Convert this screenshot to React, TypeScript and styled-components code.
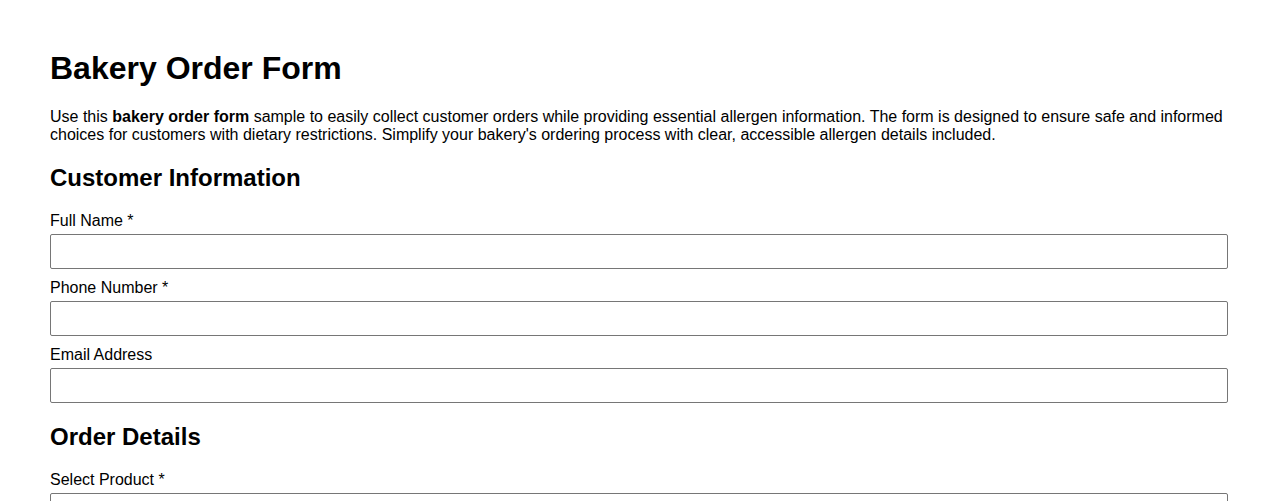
import { createGlobalStyle, styled } from 'styled-components';

const GlobalStyle = createGlobalStyle`
  html {
    overflow: hidden;
  }
  body {
    margin: 0;
    background: #fff;
    color: #000;
    font-family: 'Liberation Sans', Arial, sans-serif;
  }
`;

const Page = styled.div`
  padding: 50px 50px 40px;
`;

const Title = styled.h1`
  font-size: 32px;
  font-weight: 700;
  margin: 0 0 21.44px;
`;

const Intro = styled.p`
  font-size: 16px;
  line-height: 18px;
  margin: 0 0 16px;
`;

const SectionTitle = styled.h2`
  font-size: 24px;
  font-weight: 700;
  margin: 20px 0;
`;

const Label = styled.label`
  display: block;
  font-size: 16px;
  margin-bottom: 4px;
`;

const TextInput = styled.input`
  display: block;
  box-sizing: border-box;
  width: 100%;
  height: 35px;
  margin: 0 0 10px;
  padding: 8px;
  border: 1px solid #767676;
  border-radius: 2px;
  font-family: inherit;
  font-size: 16px;
  background: #fff;
`;

const Select = styled.select`
  display: block;
  box-sizing: border-box;
  width: 100%;
  height: 35px;
  margin: 0 0 10px;
  padding: 0 8px;
  border: 1px solid #767676;
  border-radius: 2px;
  font-family: inherit;
  font-size: 16px;
  background: #fff;
`;

const customerFields = [
  { id: 'fullName', label: 'Full Name *', type: 'text' },
  { id: 'phone', label: 'Phone Number *', type: 'tel' },
  { id: 'email', label: 'Email Address', type: 'email' },
];

const App = () => {
  return (
    <Page>
      <GlobalStyle />
      <Title>Bakery Order Form</Title>
      <Intro>
        Use this <strong>bakery order form</strong> sample to easily collect customer orders while
        providing essential allergen information. The form is designed to ensure safe and informed
        choices for customers with dietary restrictions. Simplify your bakery's ordering process
        with clear, accessible allergen details included.
      </Intro>

      <SectionTitle>Customer Information</SectionTitle>
      {customerFields.map((f) => (
        <div key={f.id}>
          <Label htmlFor={f.id}>{f.label}</Label>
          <TextInput id={f.id} type={f.type} />
        </div>
      ))}

      <SectionTitle>Order Details</SectionTitle>
      <Label htmlFor="product">Select Product *</Label>
      <Select id="product" defaultValue="">
        <option value=""></option>
        <option value="bread">Bread</option>
        <option value="cake">Cake</option>
        <option value="pastry">Pastry</option>
      </Select>
    </Page>
  );
};

export default App;
